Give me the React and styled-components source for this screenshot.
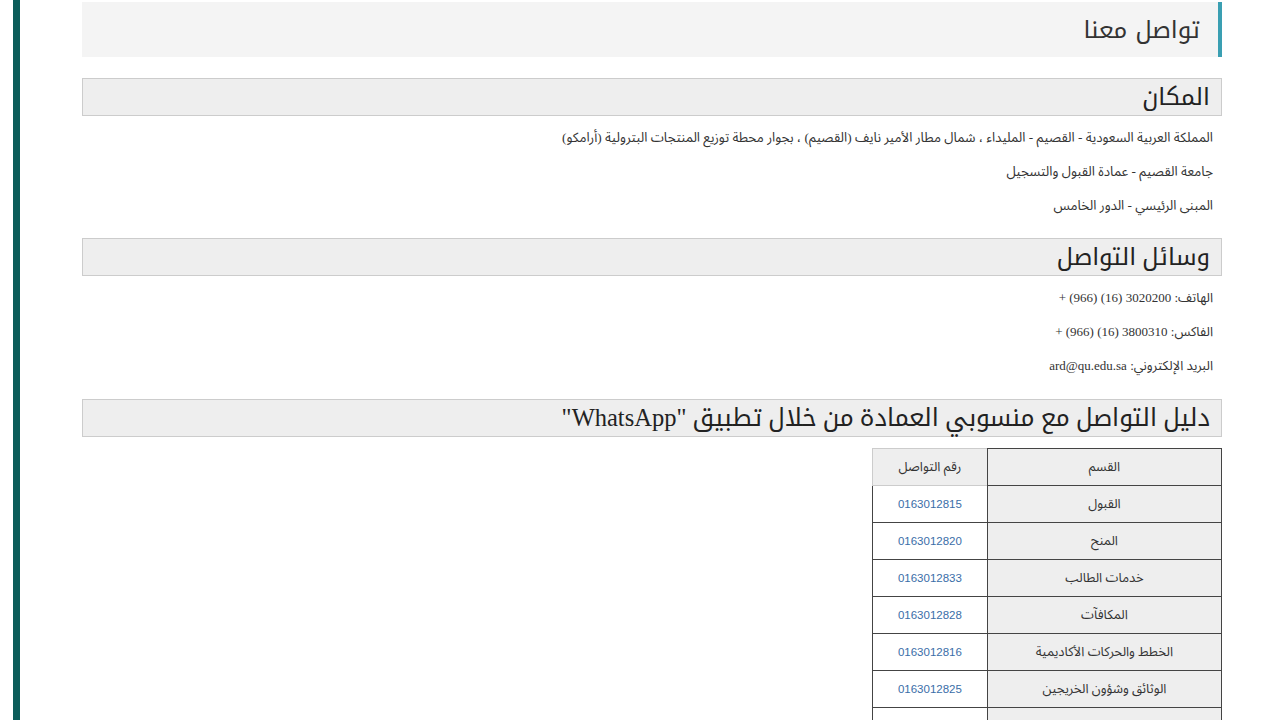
import React from "react";
import styled, { createGlobalStyle } from "styled-components";

const GlobalStyle = createGlobalStyle`
  html, body { margin: 0; padding: 0; background: #fff; }
  body { font-family: "Liberation Serif", "Noto Sans Arabic", "DejaVu Sans", serif; color: #333; }
`;

const Page = styled.div`
  display: flex;
  min-height: 720px;
  overflow: hidden;
`;

const SideBar = styled.div`
  width: 7px;
  margin-left: 13px;
  background: #0b5d5a;
  flex-shrink: 0;
`;

const Main = styled.main`
  width: 1140px;
  margin-left: 62px;
  padding-top: 2px;
  direction: rtl;
`;

const PageTitle = styled.h1`
  margin: 0 0 21px;
  height: 55px;
  box-sizing: border-box;
  display: flex;
  align-items: center;
  padding-right: 18px;
  background: #f4f4f4;
  border-right: 4px solid #3a9fb2;
  font-family: "Noto Kufi Arabic", "Noto Sans Arabic", "DejaVu Sans", sans-serif;
  font-weight: normal;
  font-size: 24px;
  color: #333;
`;

const Section = styled.section`
  padding-bottom: ${(p) => p.$pad ?? 7}px;
`;

const SectionHeader = styled.h2`
  margin: 0 0 ${(p) => p.$mb ?? 13}px;
  height: 38px;
  box-sizing: border-box;
  display: flex;
  align-items: center;
  padding-right: 11px;
  background: #eee;
  border: 1px solid #ccc;
  font-family: "Liberation Serif", "Noto Kufi Arabic", "Noto Sans Arabic", "DejaVu Sans", serif;
  font-weight: normal;
  font-size: ${(p) => p.$size || 24}px;
  color: #222;
  white-space: nowrap;
`;

const Line = styled.p`
  margin: 0 0 16px;
  padding-right: 9px;
  font-size: ${(p) => p.$size || 13}px;
  line-height: 18px;
  color: #333;
`;

const Table = styled.table`
  margin: 0;
  width: 350px;
  border-collapse: collapse;
  font-family: "Noto Sans Arabic", "DejaVu Sans", sans-serif;
  font-size: 13px;
`;

const Cell = styled.td`
  height: 37px;
  box-sizing: border-box;
  padding: 0 8px;
  text-align: center;
  vertical-align: middle;
  border: 1px solid ${(p) => (p.$light ? "#ccc" : "#444")};
  background: ${(p) => (p.$shade ? "#eee" : "#fff")};
  color: #333;
  font-weight: normal;
  width: ${(p) => p.$w}px;
`;

const Phone = styled.a`
  color: #3a6ea8;
  text-decoration: none;
  font-family: "Liberation Sans Narrow", "Liberation Sans", sans-serif;
  font-size: 11.5px;
`;

const rows = [
  ["القبول", "0163012815"],
  ["المنح", "0163012820"],
  ["خدمات الطالب", "0163012833"],
  ["المكافآت", "0163012828"],
  ["الخطط والحركات الأكاديمية", "0163012816"],
  ["الوثائق وشؤون الخريجين", "0163012825"],
  ["", ""],
];

export default function App() {
  return (
    <>
      <GlobalStyle />
      <Page>
        <SideBar />
        <Main>
          <PageTitle>تواصل معنا</PageTitle>
          <Section>
            <SectionHeader>المكان</SectionHeader>
            <Line $size={13.3}>المملكة العربية السعودية - القصيم - المليداء ، شمال مطار الأمير نايف (القصيم) ، بجوار محطة توزيع المنتجات البترولية (أرامكو)</Line>
            <Line $size={13.3}>جامعة القصيم - عمادة القبول والتسجيل</Line>
            <Line $size={13.3}>المبنى الرئيسي - الدور الخامس</Line>
          </Section>
          <Section $pad={8}>
            <SectionHeader>وسائل التواصل</SectionHeader>
            <Line>الهاتف: 3020200 (16) (966) +</Line>
            <Line>الفاكس: 3800310 (16) (966) +</Line>
            <Line>البريد الإلكتروني: ard@qu.edu.sa</Line>
          </Section>
          <SectionHeader $size={24.5} $mb={11}>دليل التواصل مع منسوبي العمادة من خلال تطبيق "WhatsApp"</SectionHeader>
          <Table>
            <thead>
              <tr>
                <Cell as="th" $shade $w={235}>القسم</Cell>
                <Cell as="th" $shade $light $w={115}>رقم التواصل</Cell>
              </tr>
            </thead>
            <tbody>
              {rows.map(([name, num], i) => (
                <tr key={i}>
                  <Cell $shade $w={235}>{name}</Cell>
                  <Cell $w={115}>
                    {num && <Phone href="#">{num}</Phone>}
                  </Cell>
                </tr>
              ))}
            </tbody>
          </Table>
        </Main>
      </Page>
    </>
  );
}
